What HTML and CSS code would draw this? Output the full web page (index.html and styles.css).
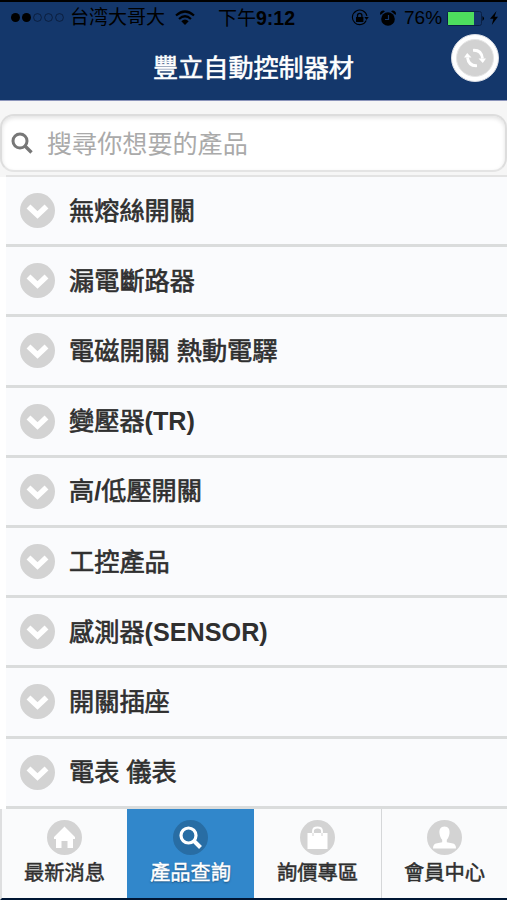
FILE: index.html
```html
<!DOCTYPE html>
<html lang="zh-Hant">
<head>
<meta charset="utf-8">
<title>豐立自動控制器材</title>
<link rel="stylesheet" href="styles.css">
</head>
<body>
<svg class="symbols" width="0" height="0">
  <symbol id="chevron" viewBox="0 0 35 35"><circle cx="17.5" cy="17.5" r="17.5" fill="#d3d3d3"/><path d="M8.500 13.500 17.500 22l9-8.500" fill="none" stroke="#fff" stroke-width="5.600"/></symbol>
</svg>
<header class="header">
  <div class="status">
    <svg class="signal" width="56" height="12" viewBox="0 0 56 12"><circle cx="5.500" cy="5.500" r="4.500"/><circle cx="16.500" cy="5.500" r="4.500"/><g fill="none" stroke="#07142c" stroke-width=".7"><circle cx="27.500" cy="5.500" r="3.900"/><circle cx="38.500" cy="5.500" r="3.900"/><circle cx="49.500" cy="5.500" r="3.900"/></g></svg>
    <span class="carrier">台湾大哥大</span>
    <svg class="wifi" width="20" height="16" viewBox="0 0 20 16"><g fill="none" stroke="#000" stroke-width="2.200"><path d="M1 5.500Q10-2.500 19 5.500"/><path d="M4 9Q10 3.500 16 9"/></g><path d="M6.300 11.200Q10 7.800 13.700 11.200L10 15z"/></svg>
    <span class="time">下午<b>9:12</b></span>
    <svg class="lock" width="18" height="18" viewBox="0 0 18 18"><path d="M15.300 11.500A7.300 7.300 0 1 1 15.900 7" fill="none" stroke="#000" stroke-width="1.100"/><path d="M13.300 8h4.500l-2.200 3z"/><path d="M5 8h7.400v5H5z"/><path d="M6.500 8V6.500a2.200 2.200 0 0 1 4.400 0V8" fill="none" stroke="#000" stroke-width="1.300"/></svg>
    <svg class="alarm" width="16" height="17" viewBox="0 0 16 17"><circle cx="8" cy="9" r="6.800"/><path d="M.5 5A3 3 0 0 1 5 1.200zM15.500 5A3 3 0 0 0 11 1.200z"/><path d="M8.500 5v4.500H5" fill="none" stroke="#14376b" stroke-width="1.200"/></svg>
    <span class="percent">76%</span>
    <svg class="battery" width="38" height="15" viewBox="0 0 38 15"><rect x=".5" y=".5" width="34" height="14" rx="2" fill="none" stroke="#0a2045"/><path d="M1 1h26v13H1z" fill="#4dde5e"/><path d="M35.500 5q3 2.500 0 5z"/></svg>
    <svg class="bolt" width="8" height="14" viewBox="0 0 8 14"><path d="M6.500 0 0 7.800h3.400L1.800 14 8 5.700H4.600z"/></svg>
  </div>
  <h1 class="title">豐立自動控制器材</h1>
  <button class="refresh" aria-label="重新整理"><svg width="48" height="48" viewBox="0 0 48 48"><circle cx="24" cy="24" r="23.500" fill="#fff" stroke="#d8dce4"/><circle cx="24" cy="24" r="18.500" fill="#d2d2d2" stroke="#e5e5e5"/><g fill="none" stroke="#fff" stroke-width="2.800"><path d="M22 16.300q8.500-.5 9.500 8.200"/><path d="M26 31.700q-8.500.5-9.500-8.200"/></g><path d="M27.500 24.500h7.500l-3.200 4.500zM13 23.500h7.500l-4.300-4.500z" fill="#fff"/></svg></button>
</header>
<main>
  <div class="search-area">
    <label class="search"><svg width="22" height="22" viewBox="0 0 22 22" fill="none" stroke="#777"><circle cx="9" cy="9" r="7" stroke-width="3"/><path d="m14 14 6.500 6.500" stroke-width="3.400"/></svg><input type="text" placeholder="搜尋你想要的產品"></label>
  </div>
  <ul class="list">
    <li><svg><use href="#chevron"/></svg><span>無熔絲開關</span></li>
    <li><svg><use href="#chevron"/></svg><span>漏電斷路器</span></li>
    <li><svg><use href="#chevron"/></svg><span>電磁開關 熱動電驛</span></li>
    <li><svg><use href="#chevron"/></svg><span>變壓器<b>(TR)</b></span></li>
    <li><svg><use href="#chevron"/></svg><span>高<b>/</b>低壓開關</span></li>
    <li><svg><use href="#chevron"/></svg><span>工控產品</span></li>
    <li><svg><use href="#chevron"/></svg><span>感測器<b>(SENSOR)</b></span></li>
    <li><svg><use href="#chevron"/></svg><span>開關插座</span></li>
    <li><svg><use href="#chevron"/></svg><span>電表 儀表</span></li>
  </ul>
</main>
<nav class="tabs">
  <a class="tab"><svg viewBox="0 0 35 35"><circle cx="17.500" cy="17.500" r="17.500" fill="#d3d3d3"/><path d="M17.500 6.500 28 17v2h-2v9h-5.500v-7h-6v7H9v-9H7v-2z" fill="#fff"/></svg><span>最新消息</span></a>
  <a class="tab active"><svg viewBox="0 0 35 35"><circle cx="17.500" cy="17.500" r="17.500" fill="#286da4"/><circle cx="15.500" cy="15.500" r="7.500" fill="none" stroke="#fff" stroke-width="3.200"/><path d="m20.500 20.500 7 7" stroke="#fff" stroke-width="4"/></svg><span>產品查詢</span></a>
  <a class="tab"><svg viewBox="0 0 35 35"><circle cx="17.500" cy="17.500" r="17.500" fill="#d3d3d3"/><path d="M7.500 13h20v16h-20z" fill="#fff"/><path d="M13 16v-5q0-3.500 4.500-3.500T22 11v5" fill="none" stroke="#fff" stroke-width="1.800"/><path d="M13 13v3M22 13v3" stroke="#d3d3d3"/></svg><span>詢價專區</span></a>
  <a class="tab"><svg viewBox="0 0 35 35"><circle cx="17.500" cy="17.500" r="17.500" fill="#d3d3d3"/><path d="M17.500 6.500c4 0 5.500 3 5 7-.4 3-1.500 5-2.700 6.300v2.400l6.200 1.300q3 .8 3 5H6q0-4.200 3-5l6.200-1.300v-2.400c-1.200-1.300-2.300-3.300-2.700-6.300-.5-4 1-7 5-7z" fill="#fff"/></svg><span>會員中心</span></a>
</nav>
</body>
</html>
```
FILE: styles.css
```css
* { box-sizing: border-box; }
body {
  margin: 0;
  height: 900px;
  display: flex;
  flex-direction: column;
  overflow: hidden;
  background: #fff;
  font-family: "Liberation Sans", "Noto Sans CJK TC", sans-serif;
  color: #2f2f2f;
}
.symbols { position: absolute; }
.header {
  position: relative;
  flex: none;
  height: 101px;
  background: #14376b;
  border-top: 2px solid #000;
  border-bottom: 1px solid #8c95bb;
}
.status {
  display: flex;
  align-items: center;
  height: 32px;
  padding-left: 10px;
  color: #000;
  font-size: 19px;
  white-space: nowrap;
}
.status svg { flex: none; }
.status span { line-height: 28px; }
.status .carrier { width: 96px; margin-left: 4px; }
.wifi { margin-left: 9px; }
.status .time { width: 80px; margin-left: 23px; }
.time b { font-size: 19.500px; }
.lock { margin-left: 53px; }
.alarm { margin-left: 11px; }
.status .percent { width: 38px; margin: 0 0 0 8px; }
.battery { margin-left: 5px; }
.bolt { margin-left: 5px; }
.title {
  margin: 16px 0 0;
  text-align: center;
  font-size: 25.100px;
  line-height: 36px;
  font-weight: 400;
  color: #fff;
  -webkit-text-stroke: .6px #fff;
}
.refresh {
  position: absolute;
  left: 451px;
  top: 32px;
  width: 48px;
  height: 48px;
  padding: 0;
  border: 0;
  background: none;
}
.refresh svg { display: block; }
.search-area {
  height: 76px;
  padding-top: 13px;
  background: #f6f6f6;
}
.search {
  display: flex;
  align-items: center;
  height: 58px;
  padding-left: 9px;
  border: 2px solid #ddd;
  border-bottom-color: #e4e4e4;
  border-radius: 14px;
  background: #fff;
  box-shadow: inset 0 2px 4px #e2e2e2;
}
.search input {
  width: 300px;
  height: 42px;
  margin: -2px 0 0 14px;
  padding: 0;
  border: 0;
  outline: 0;
  background: none;
  font: 25.100px "Noto Sans CJK TC", sans-serif;
}
.search input::placeholder { color: #aaa; opacity: 1; }
.list {
  margin: 0 0 0 6px;
  padding: 0;
  list-style: none;
  background: #fafbfd;
  box-shadow: 0 -2px #e3e3e3;
}
.list li {
  display: flex;
  align-items: center;
  height: 70.200px;
  padding-left: 14px;
  border-bottom: 3px solid #dadcdc;
}
.list svg { width: 35px; height: 35px; flex: none; }
.list span {
  margin-left: 14px;
  font-size: 25.200px;
  line-height: 36px;
  white-space: pre;
  -webkit-text-stroke: .65px #2f2f2f;
}
.list b { -webkit-text-stroke: 0; }
.tabs {
  position: relative;
  display: grid;
  grid-template-columns: 125px 127px 127px 126px;
  height: 91px;
  margin-top: auto;
  border-left: 2px solid #dedfe0;
  border-bottom: 2px solid #001634;
  background: #fafbfc;
}
.tab {
  display: flex;
  flex-direction: column;
  align-items: center;
  padding-top: 11px;
}
.tab:last-child { border-left: 1px solid #d5d7d9; }
.tab svg { width: 35px; height: 35px; }
.tab span {
  margin-top: 3px;
  font-size: 20.300px;
  line-height: 30px;
  -webkit-text-stroke: .5px #2f2f2f;
}
.active { background: #3187cb; color: #fff; }
.tab.active span { -webkit-text-stroke: .4px #fff; text-shadow: 0 1px 2px #143f65; }
```
